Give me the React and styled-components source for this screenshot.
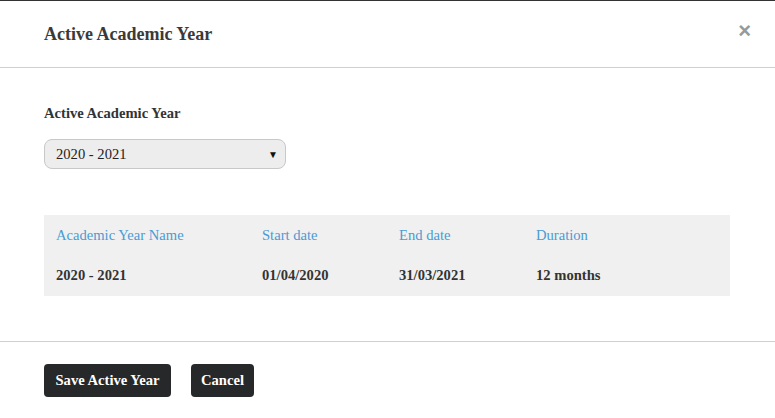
import React from 'react';
import styled, { createGlobalStyle } from 'styled-components';

const GlobalStyle = createGlobalStyle`
  html, body {
    margin: 0;
    padding: 0;
    background: #fff;
    font-family: "Liberation Serif", "Times New Roman", serif;
    color: #333;
  }
`;

const Modal = styled.div`
  width: 775px;
  height: 418px;
  box-sizing: border-box;
  border-top: 1px solid #333;
  background: #fff;
  overflow: hidden;
`;

const Header = styled.div`
  height: 66px;
  padding: 0 44px;
  display: flex;
  align-items: center;
  justify-content: space-between;
  border-bottom: 1px solid #cfcfcf;
`;

const Title = styled.h4`
  margin: 0;
  font-size: 18px;
  font-weight: bold;
  color: #3a3a3a;
`;

const Close = styled.button`
  border: none;
  background: none;
  padding: 0;
  margin-right: -20px;
  margin-top: -6px;
  color: #999;
  font-size: 22px;
  font-weight: bold;
  font-family: "Liberation Sans", Arial, sans-serif;
  line-height: 1;
  cursor: pointer;
`;

const Body = styled.div`
  padding: 37px 45px 45px 44px;
  border-bottom: 1px solid #cfcfcf;
`;

const Label = styled.label`
  display: block;
  font-size: 14.6px;
  font-weight: bold;
  line-height: 16px;
  margin-bottom: 18px;
  color: #333;
`;

const SelectBox = styled.div`
  width: 242px;
  height: 30px;
  box-sizing: border-box;
  border: 1px solid #c8c8c8;
  border-radius: 8px;
  background: #ededed;
  display: flex;
  align-items: center;
  justify-content: space-between;
  padding: 0 7px 0 11px;
  font-size: 14.6px;
  color: #222;
`;

const Arrow = styled.span`
  font-size: 10px;
  color: #111;
`;

const Table = styled.div`
  margin-top: 46px;
  background: #f0f0f0;
  display: grid;
  grid-template-columns: 206px 137px 137px 1fr;
`;

const Cell = styled.div`
  padding-left: 12px;
  height: ${(p) => (p.$head ? '40px' : '41px')};
  display: flex;
  align-items: center;
  font-size: 14.6px;
  font-weight: ${(p) => (p.$head ? 'normal' : 'bold')};
  color: ${(p) => (p.$head ? '#4a9bd3' : '#333')};
`;

const Footer = styled.div`
  padding: 22px 44px;
  display: flex;
  gap: 20px;
`;

const Button = styled.button`
  height: 33px;
  padding: 0 ${(p) => (p.$narrow ? '10px' : '11.5px')};
  border: none;
  border-radius: 4px;
  background: #27282a;
  color: #fff;
  font-family: "Liberation Serif", "Times New Roman", serif;
  font-size: 14.6px;
  font-weight: bold;
  cursor: pointer;
`;

const columns = ['Academic Year Name', 'Start date', 'End date', 'Duration'];
const row = ['2020 - 2021', '01/04/2020', '31/03/2021', '12 months'];

export default function App() {
  return (
    <>
      <GlobalStyle />
      <Modal>
        <Header>
          <Title>Active Academic Year</Title>
          <Close>×</Close>
        </Header>
        <Body>
          <Label>Active Academic Year</Label>
          <SelectBox>
            <span>2020 - 2021</span>
            <Arrow>▼</Arrow>
          </SelectBox>
          <Table>
            {columns.map((c) => (
              <Cell $head key={c}>{c}</Cell>
            ))}
            {row.map((v) => (
              <Cell key={v}>{v}</Cell>
            ))}
          </Table>
        </Body>
        <Footer>
          <Button>Save Active Year</Button>
          <Button $narrow>Cancel</Button>
        </Footer>
      </Modal>
    </>
  );
}
